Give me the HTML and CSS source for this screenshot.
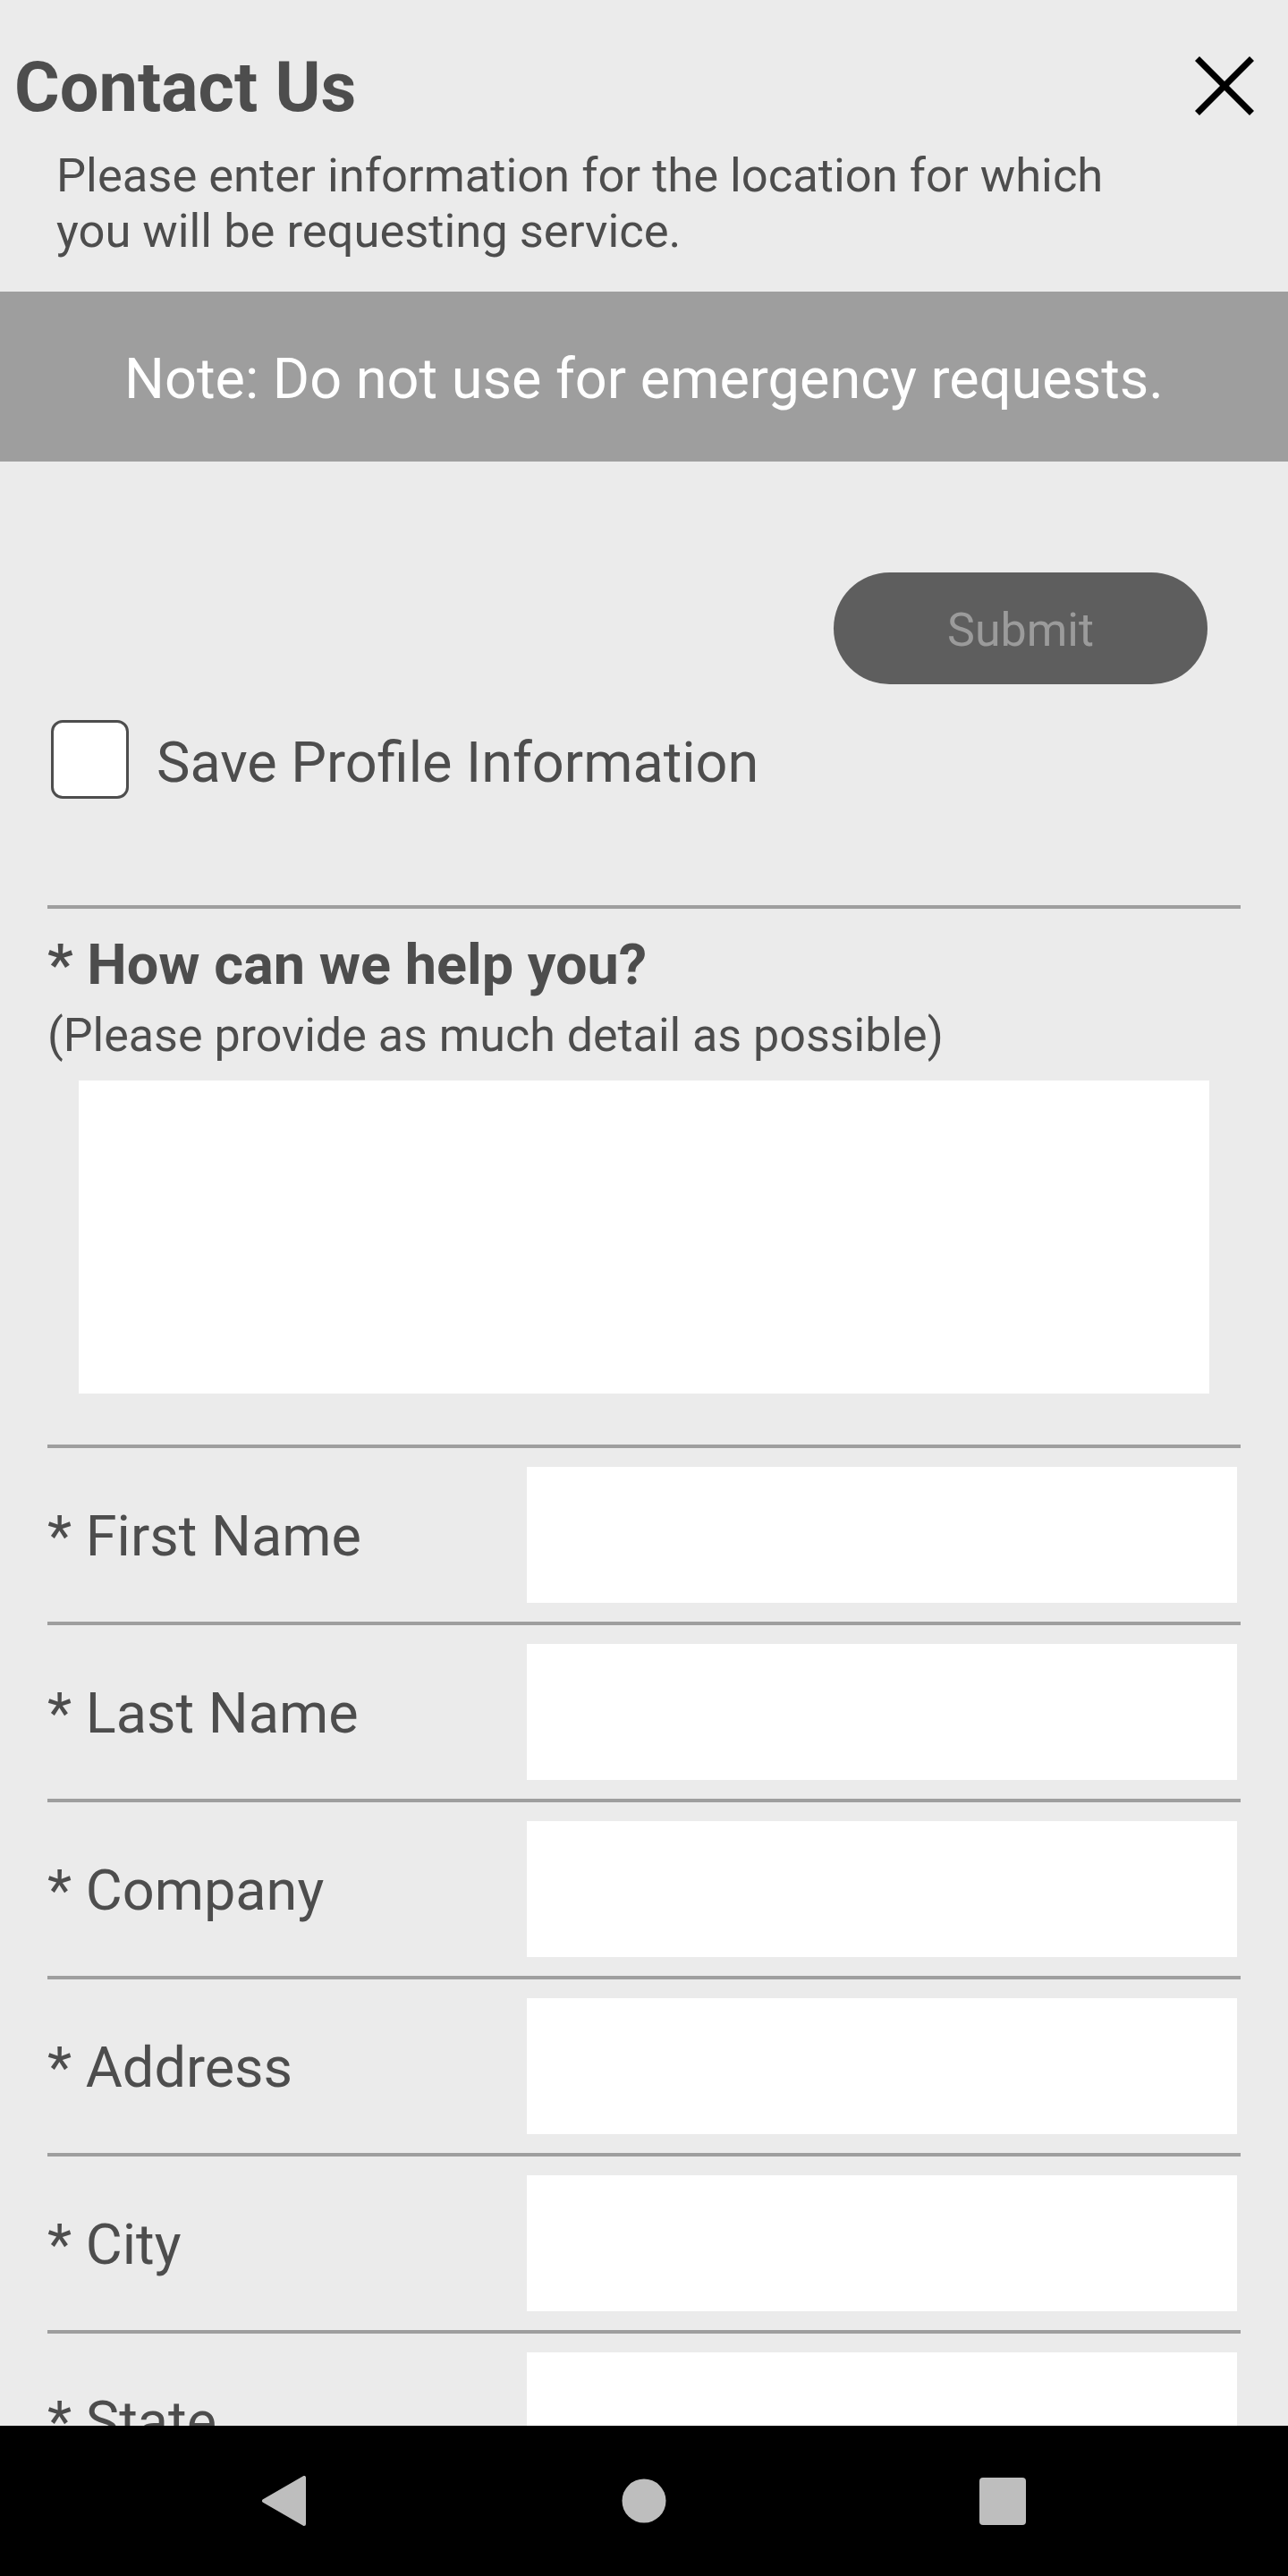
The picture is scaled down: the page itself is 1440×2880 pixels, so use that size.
FILE: index.html
```html
<!DOCTYPE html>
<html lang="en">
<head>
<meta charset="utf-8">
<title>Contact Us</title>
<link rel="stylesheet" href="styles.css">
</head>
<body>
<div class="screen">
  <main class="content">
    <header class="top">
      <h1 class="title">Contact Us</h1>
      <svg class="close" width="66" height="66" viewBox="0 0 66 66" aria-label="Close">
        <line x1="2.5" y1="2.5" x2="63.5" y2="63.5" stroke="#000" stroke-width="7"/>
        <line x1="63.5" y1="2.5" x2="2.5" y2="63.5" stroke="#000" stroke-width="7"/>
      </svg>
    </header>
    <p class="intro">Please enter information for the location for which you will be requesting service.</p>
    <div class="note">Note: Do not use for emergency requests.</div>
    <div class="actions">
      <button class="submit" type="button">Submit</button>
    </div>
    <label class="save">
      <span class="checkbox"></span>
      <span class="save-text">Save Profile Information</span>
    </label>
    <section class="form">
      <div class="help">
        <div class="help-title">* How can we help you?</div>
        <div class="help-sub">(Please provide as much detail as possible)</div>
        <textarea class="help-box"></textarea>
      </div>
      <div class="row"><span class="label">* First Name</span><input class="field" type="text"></div>
      <div class="row"><span class="label">* Last Name</span><input class="field" type="text"></div>
      <div class="row"><span class="label">* Company</span><input class="field" type="text"></div>
      <div class="row"><span class="label">* Address</span><input class="field" type="text"></div>
      <div class="row"><span class="label">* City</span><input class="field" type="text"></div>
      <div class="row"><span class="label">* State</span><input class="field" type="text"></div>
    </section>
  </main>
  <nav class="navbar">
    <svg class="nav-icon" width="56" height="56" viewBox="0 0 56 56" aria-label="Back">
      <polygon points="4,28 49,2 49,54" fill="#bebebe" stroke="#bebebe" stroke-width="4" stroke-linejoin="round"/>
    </svg>
    <svg class="nav-icon" width="56" height="56" viewBox="0 0 56 56" aria-label="Home">
      <circle cx="28" cy="28" r="24.5" fill="#bebebe"/>
    </svg>
    <svg class="nav-icon" width="56" height="56" viewBox="0 0 56 56" aria-label="Recents">
      <rect x="2" y="2" width="52" height="53" rx="4" fill="#bebebe"/>
    </svg>
  </nav>
</div>
</body>
</html>
```
FILE: styles.css
```css
* {
  box-sizing: border-box;
}

html, body {
  margin: 0;
  padding: 0;
}

body {
  background: #ebebeb;
  font-family: Roboto, "Liberation Sans", Arial, sans-serif;
  color: #4d4d4d;
}

.screen {
  width: 1440px;
  height: 2880px;
  display: flex;
  flex-direction: column;
}

.content {
  flex: 1;
  overflow: hidden;
  background: #ebebeb;
}

.top {
  display: flex;
  align-items: center;
  justify-content: space-between;
  margin-top: 53px;
  padding: 0 38px 0 16px;
}

.title {
  margin: 0;
  font-size: 77.5px;
  line-height: 90px;
  font-weight: 700;
  color: #4d4d4d;
}

.close {
  display: block;
  margin-top: -4px;
}

.intro {
  margin: 22px 0 0 0;
  padding-left: 63px;
  width: 1283px;
  font-size: 52.5px;
  line-height: 62px;
  color: #4d4d4d;
}

.note {
  margin-top: 37px;
  height: 190px;
  background: #9e9e9e;
  color: #ffffff;
  font-size: 63px;
  line-height: 80px;
  padding-top: 58px;
  text-align: center;
}

.actions {
  display: flex;
  justify-content: flex-end;
  margin-top: 124px;
  padding-right: 90px;
}

.submit {
  width: 418px;
  height: 125px;
  border: none;
  border-radius: 63px;
  background: #5e5e5e;
  color: #9b9b9b;
  font-family: Roboto, "Liberation Sans", Arial, sans-serif;
  font-size: 52px;
  padding: 3px 0 0 0;
  display: flex;
  align-items: center;
  justify-content: center;
}

.save {
  display: flex;
  align-items: center;
  gap: 31px;
  margin-top: 40px;
  padding-left: 57px;
}

.checkbox {
  display: block;
  width: 87px;
  height: 88px;
  background: #ffffff;
  border: 3px solid #4d4d4d;
  border-radius: 13px;
}

.save-text {
  font-size: 63px;
  line-height: 76px;
  margin-top: 8px;
}

.form {
  margin-top: 119px;
  padding: 0 53px;
}

.help {
  border-top: 4px solid #9e9e9e;
  padding-bottom: 57px;
}

.help-title {
  margin-top: 27px;
  font-size: 63px;
  line-height: 72px;
  font-weight: 700;
}

.help-sub {
  font-size: 52px;
  line-height: 86px;
}

.help-box {
  display: block;
  margin: 7px 35px 0 35px;
  width: 1264px;
  height: 350px;
  border: none;
  background: #ffffff;
  resize: none;
  outline: none;
  padding: 0;
}

.row {
  display: flex;
  align-items: center;
  border-top: 4px solid #9e9e9e;
  padding: 21px 0 21px 0;
}

.label {
  width: 536px;
  font-size: 63px;
  line-height: 76px;
  padding-top: 3px;
}

.field {
  display: block;
  width: 794px;
  height: 152px;
  border: none;
  background: #ffffff;
  outline: none;
  padding: 0;
}

.navbar {
  height: 168px;
  flex: 0 0 168px;
  background: #000000;
  display: flex;
  align-items: center;
  justify-content: center;
  gap: 345px;
}

.nav-icon {
  display: block;
}
```
